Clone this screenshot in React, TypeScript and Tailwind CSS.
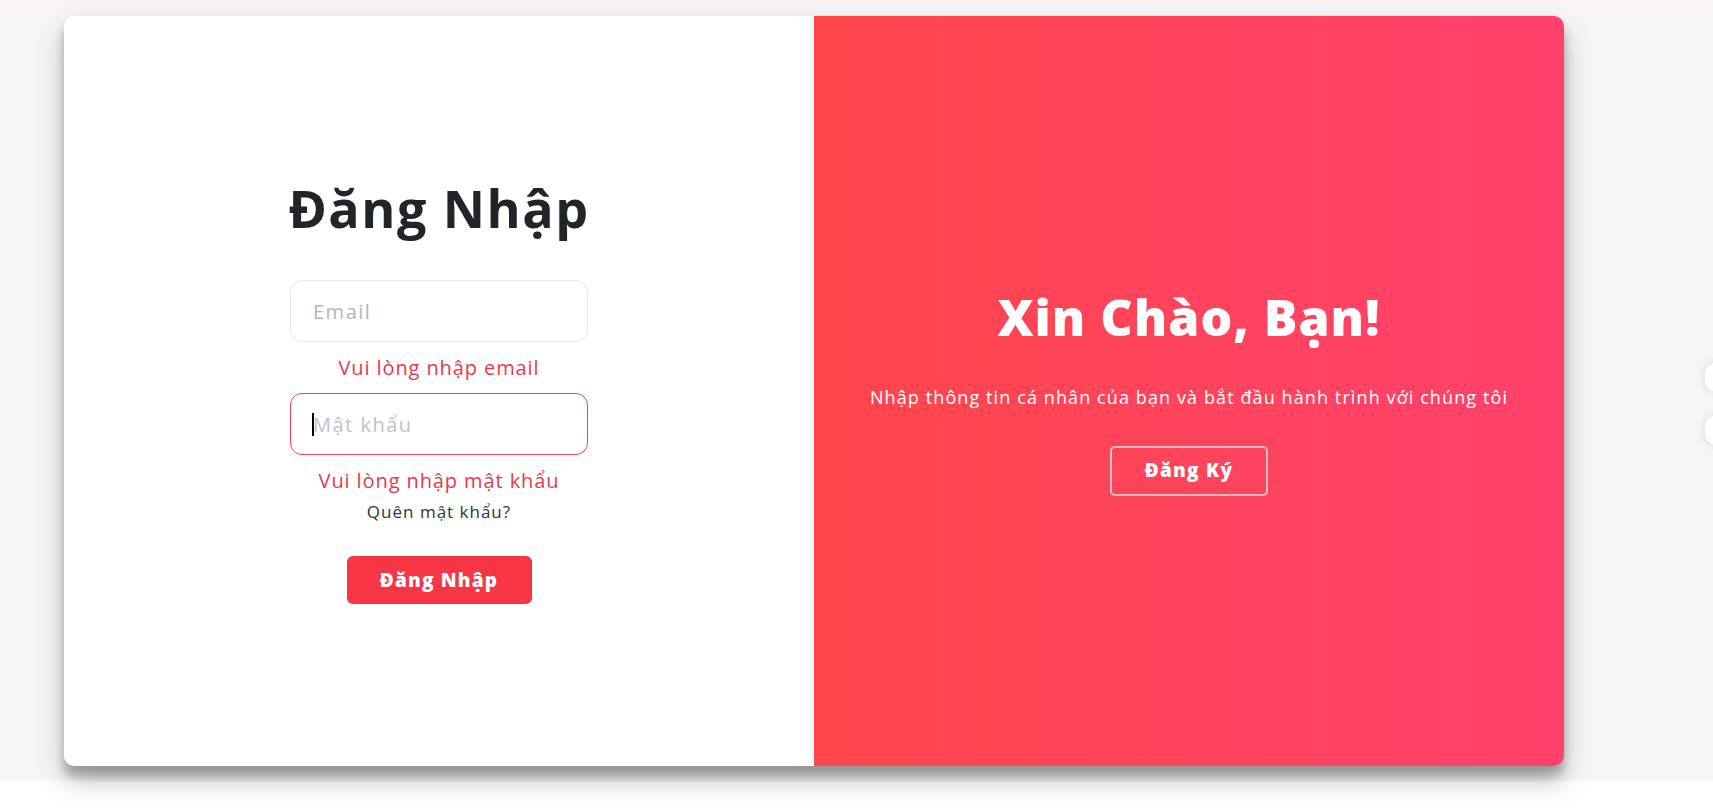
export default function App() {
  return (
    <main className="min-h-screen bg-white font-['Open_Sans',_'Noto_Sans',_sans-serif] overflow-hidden">
      {/* top strip */}
      <div className="h-[3px] bg-[#fdf3f0]" />

      <div className="relative h-[778px] bg-[#f6f5f7] pl-[64px] pt-[13px]">
        {/* Card */}
        <div className="flex w-[1500px] h-[750px] rounded-[10px] bg-white overflow-hidden shadow-[0_14px_28px_rgba(0,0,0,0.25),0_10px_10px_rgba(0,0,0,0.22)]">

          {/* Sign in */}
          <section className="w-[750px] flex flex-col items-center justify-center">
            <h1 className="text-[52px] leading-[60px] font-bold text-[#212529] tracking-[1.5px]">
              Đăng Nhập
            </h1>

            <input
              type="email"
              placeholder="Email"
              className="mt-[42px] w-[298px] h-[62px] rounded-xl border border-[#e6e8ec] bg-white px-[22px] text-[20px] tracking-[1.5px] text-[#212529] placeholder:text-[#aeb6c9] outline-none"
            />
            <p className="mt-[12px] text-[20px] leading-[28px] text-[#e8394d] tracking-[0.9px]">
              Vui lòng nhập email
            </p>

            <div className="relative mt-[11px]">
              <input
                type="password"
                placeholder="Mật khẩu"
                className="w-[298px] h-[62px] rounded-xl border border-[#f04352] bg-white px-[22px] text-[20px] tracking-[1.5px] text-[#212529] placeholder:text-[#bcc2cf] outline-none"
              />
              <span className="absolute left-[22px] top-[20px] w-[2px] h-[23px] bg-black" />
            </div>
            <p className="mt-[12px] text-[20px] leading-[28px] text-[#e8394d] tracking-[0.9px]">
              Vui lòng nhập mật khẩu
            </p>

            <a className="mt-[5px] text-[17px] leading-[24px] text-[#333] tracking-[1px] cursor-pointer">
              Quên mật khẩu?
            </a>

            <button className="mt-[32px] w-[185px] h-[48px] rounded-[6px] bg-[#f73545] text-white text-[19px] font-extrabold tracking-[1.2px]">
              Đăng Nhập
            </button>
          </section>

          {/* Overlay */}
          <section className="w-[750px] flex flex-col items-center justify-center bg-gradient-to-r from-[#ff464a] to-[#ff416c] text-white">
            <h1 className="text-[50px] leading-[60px] font-extrabold tracking-[1px]">
              Xin Chào, Bạn!
            </h1>
            <p className="mt-[38px] text-[18px] leading-[24px] tracking-[1.1px]">
              Nhập thông tin cá nhân của bạn và bắt đầu hành trình với chúng tôi
            </p>
            <button className="mt-[37px] w-[158px] h-[50px] rounded-[5px] border-2 border-[#c9c3c6] text-[19px] font-extrabold tracking-[1.3px]">
              Đăng Ký
            </button>
          </section>
        </div>

        {/* clipped floating buttons at right edge */}
        <span className="absolute right-[-16px] top-[359px] w-[24px] h-[30px] rounded-full bg-white shadow-[0_0_10px_rgba(0,0,0,0.12)]" />
        <span className="absolute right-[-16px] top-[412px] w-[24px] h-[30px] rounded-full bg-white shadow-[0_0_10px_rgba(0,0,0,0.12)]" />
      </div>
    </main>
  );
}
